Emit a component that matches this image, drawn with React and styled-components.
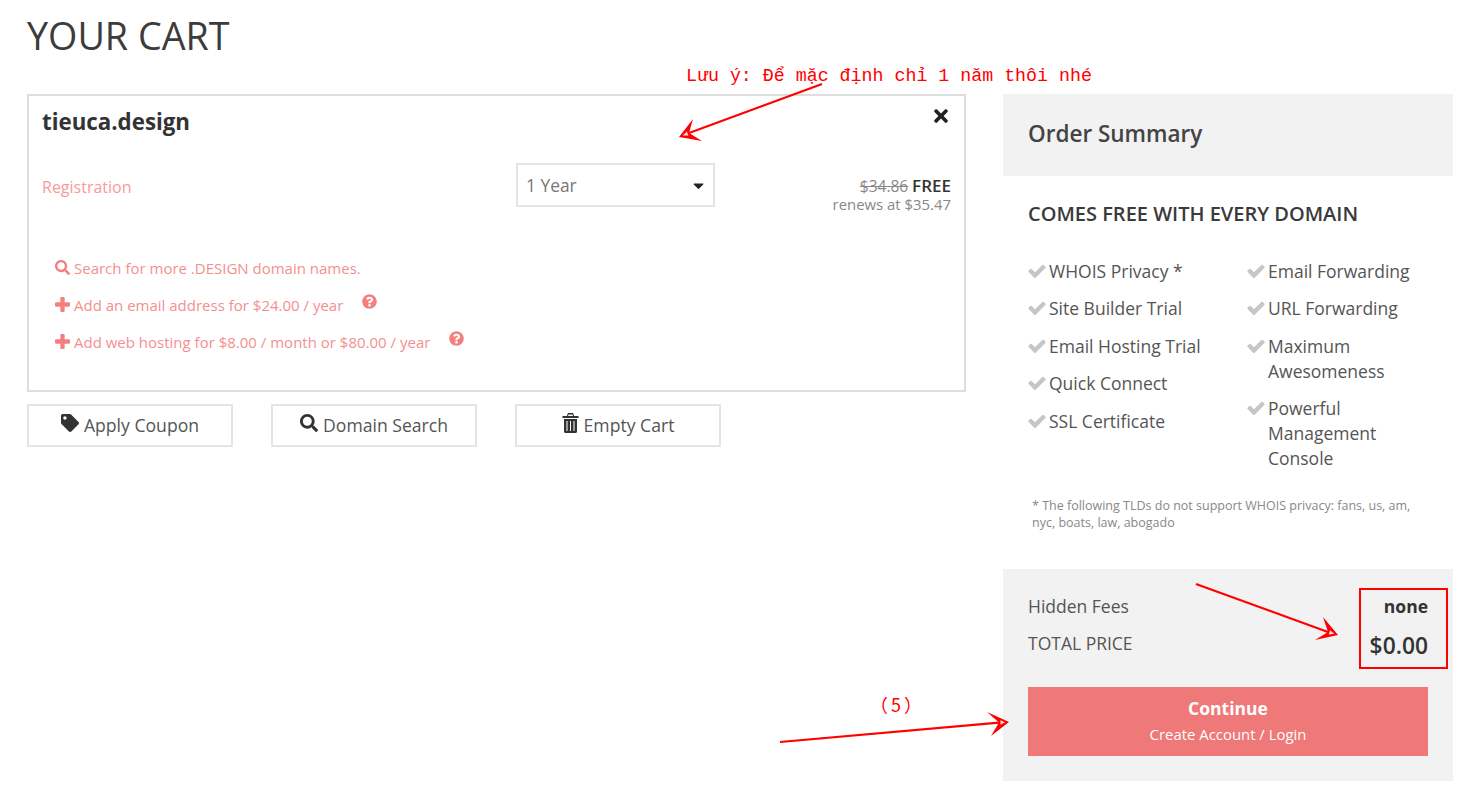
import React from "react";
import styled, { createGlobalStyle } from "styled-components";
import { FaTimes, FaTag, FaSearch, FaQuestionCircle, FaCaretDown } from "react-icons/fa";

const Global = createGlobalStyle`
  html, body { margin: 0; padding: 0; background: #fff; }
  body { font-family: "Open Sans", "Noto Sans", sans-serif; color: #555; }
`;

const Page = styled.div`
  position: relative;
  width: 1475px;
  height: 796px;
  overflow: hidden;
  box-sizing: border-box;
  padding: 0 22px 0 27px;
`;
const Title = styled.h1`
  margin: 0;
  height: 94px;
  padding-top: 11px;
  box-sizing: border-box;
  font-size: 37.7px;
  line-height: 50px;
  font-weight: 400;
  color: #3c3c3c;
`;
const Columns = styled.div`
  display: grid;
  grid-template-columns: 939px 450px;
  column-gap: 37px;
  align-items: start;
`;
const Card = styled.section`
  position: relative;
  box-sizing: border-box;
  height: 298px;
  border: 2px solid #dedede;
  padding: 11px 13px 0 13px;
`;
const DomainName = styled.h2`
  margin: 0;
  font-size: 22.3px;
  line-height: 30px;
  font-weight: 700;
  color: #333;
`;
const RemoveButton = styled.span`
  position: absolute;
  top: 10px;
  right: 13px;
  display: flex;
  color: #222;
  font-size: 20px;
`;
const RegRow = styled.div`
  display: grid;
  grid-template-columns: 474px 199px 1fr;
  margin-top: 26px;
  height: 44px;
`;
const RegLabel = styled.span`
  font-size: 16px;
  line-height: 24px;
  padding-top: 12px;
  color: #f79a9a;
`;
const Select = styled.div`
  display: flex;
  align-items: center;
  justify-content: space-between;
  box-sizing: border-box;
  height: 44px;
  border: 2px solid #e4e4e4;
  padding: 0 6px 0 8px;
  font-size: 17.4px;
  color: #777;
`;
const PriceBox = styled.div`
  text-align: right;
  padding-top: 14px;
  font-size: 14.9px;
  line-height: 18px;
  color: #888;
`;
const OldPrice = styled.s`
  color: #888;
  font-size: 15.5px;
`;
const Free = styled.strong`
  color: #333;
  font-weight: 600;
  font-size: 17px;
`;
const Extras = styled.ul`
  list-style: none;
  margin: 48px 0 0;
  padding: 0 0 0 13px;
  display: flex;
  flex-direction: column;
  gap: 12px;
`;
const Extra = styled.li`
  display: flex;
  align-items: center;
  height: 25px;
  font-size: 15px;
  color: #f58f8f;
  & > svg { font-size: 15px; margin-right: 4px; color: #f37f7f; }
`;
const Help = styled(FaQuestionCircle)`
  margin-left: 19px;
  margin-top: -6px;
  font-size: 18px;
  color: #ef7878;
`;
const Actions = styled.div`
  display: flex;
  gap: 38px;
  margin-top: 12px;
`;
const ActionButton = styled.button`
  display: flex;
  align-items: center;
  justify-content: center;
  gap: 5px;
  box-sizing: border-box;
  width: 206px;
  height: 43px;
  padding: 0 0 1px;
  background: #fff;
  border: 2px solid #e4e4e4;
  font-family: inherit;
  font-size: 17.6px;
  color: #555;
  & > svg { color: #333; font-size: 18px; margin-top: -5px; }
`;
const SummaryHead = styled.div`
  display: flex;
  align-items: center;
  box-sizing: border-box;
  height: 82px;
  padding: 0 0 4px 25px;
  background: #f2f2f2;
  font-size: 22.5px;
  font-weight: 600;
  color: #444;
`;
const FreeTitle = styled.h3`
  margin: 25px 0 0 25px;
  font-size: 20px;
  line-height: 26px;
  font-weight: 600;
  color: #3a3a3a;
`;
const Features = styled.div`
  display: grid;
  grid-template-columns: 219px 180px;
  margin: 31.9px 0 0 25px;
`;
const FeatureCol = styled.ul`
  list-style: none;
  margin: 0;
  padding: 0;
  display: flex;
  flex-direction: column;
  gap: 12.5px;
`;
const Feature = styled.li`
  display: grid;
  grid-template-columns: 21px 1fr;
  font-size: 17.5px;
  line-height: 25px;
  color: #555;
`;
const CheckMark = styled.svg`
  width: 20px;
  height: 20px;
  margin: 2px 0 0 -1px;
  fill: #c6c6c6;
`;
const Note = styled.p`
  margin: 25.6px 20px 0 29px;
  font-size: 12.5px;
  line-height: 17px;
  color: #888;
`;
const Totals = styled.div`
  margin-top: 38px;
  height: 212px;
  box-sizing: border-box;
  padding: 25px 25px 0;
  background: #f2f2f2;
`;
const TotalRow = styled.div`
  display: flex;
  justify-content: space-between;
  height: 37px;
  font-size: 17.5px;
  line-height: 25px;
  color: #555;
`;
const Fee = styled.strong`
  font-size: 17.5px;
  font-weight: 700;
  color: #333;
`;
const Total = styled.strong`
  font-size: 22.8px;
  font-weight: 600;
  line-height: 32px;
  margin-top: -1px;
  color: #333;
`;
const Continue = styled.button`
  display: flex;
  flex-direction: column;
  align-items: center;
  width: 100%;
  height: 69px;
  margin-top: 19px;
  padding: 8px 0 0;
  border: 0;
  background: #ef7878;
  color: #fff;
  font-family: inherit;
`;
const ContinueMain = styled.span`
  font-size: 17.5px;
  line-height: 27px;
  font-weight: 700;
`;
const ContinueSub = styled.span`
  font-size: 14.9px;
  line-height: 25px;
`;
const Note1 = styled.span`
  position: absolute;
  left: 686px;
  top: 65px;
  font-family: "Liberation Mono", "DejaVu Sans Mono", monospace;
  font-size: 18.3px;
  line-height: 22px;
  color: #f00;
  white-space: nowrap;
`;
const Note5 = styled.span`
  position: absolute;
  left: 870px;
  top: 691px;
  font-family: "Noto Sans CJK SC", sans-serif;
  font-size: 18px;
  letter-spacing: 3px;
  line-height: 26px;
  color: #f00;
  white-space: nowrap;
`;
const Overlay = styled.svg`
  position: absolute;
  left: 0;
  top: 0;
  width: 1475px;
  height: 796px;
  pointer-events: none;
`;
const TrashIcon = () => (
  <svg width="17" height="20" viewBox="0 0 17 20" fill="currentColor">
    <path d="M6 0h5l1.2 3H16.500v2H.5V3h4.300zM6.500 1.500 6 3h5l-.5-1.500zM2 6h13v12.500a1.500 1.500 0 0 1-1.500 1.500h-10A1.500 1.500 0 0 1 2 18.500zm2.500 2v10h1V8zm3.500 0v10h1V8zm3.500 0v10h1V8z" fillRule="evenodd" />
  </svg>
);
const PlusIcon = () => (
  <svg width="1em" height="1em" viewBox="0 0 14 14" fill="currentColor">
    <path d="M5 1a1 1 0 0 1 1-1h2a1 1 0 0 1 1 1v4h4a1 1 0 0 1 1 1v2a1 1 0 0 1-1 1H9v4a1 1 0 0 1-1 1H6a1 1 0 0 1-1-1V9H1a1 1 0 0 1-1-1V6a1 1 0 0 1 1-1h4z" />
  </svg>
);
const CheckIcon = () => (
  <CheckMark viewBox="0 0 1792 1792">
    <path d="M1671 566q0 40-28 68l-724 724-136 136q-28 28-68 28t-68-28l-136-136-362-362q-28-28-28-68t28-68l136-136q28-28 68-28t68 28l294 295 656-657q28-28 68-28t68 28l136 136q28 28 28 68z" />
  </CheckMark>
);
const Arrow = ({ from, tip, a, b, n }) => {
  const dx = tip[0] - n[0];
  const dy = tip[1] - n[1];
  const len = Math.hypot(dx, dy);
  const ux = dx / len;
  const uy = dy / len;
  const apex = [tip[0] - ux * 4, tip[1] - uy * 4];
  const s1 = [n[0] + ux * 1.5 - uy * 2.2, n[1] + uy * 1.5 + ux * 2.2];
  const s2 = [n[0] + ux * 1.5 + uy * 2.2, n[1] + uy * 1.5 - ux * 2.2];
  return (
    <g>
      <line x1={from[0]} y1={from[1]} x2={n[0]} y2={n[1]} stroke="#f00" strokeWidth="2.200" />
      <path d={`M${a[0]} ${a[1]} L${tip[0]} ${tip[1]} L${b[0]} ${b[1]} L${n[0]} ${n[1]} Z`} fill="#f00" />
      <path d={`M${apex[0]} ${apex[1]} L${s1[0]} ${s1[1]} L${s2[0]} ${s2[1]} Z`} fill="#fff" fillOpacity="0.85" />
    </g>
  );
};

const left = ["WHOIS Privacy *", "Site Builder Trial", "Email Hosting Trial", "Quick Connect", "SSL Certificate"];
const right = ["Email Forwarding", "URL Forwarding", "Maximum Awesomeness", "Powerful Management Console"];

const FeatureList = ({ items }) => (
  <FeatureCol>
    {items.map((t) => (
      <Feature key={t}><CheckIcon /><span>{t}</span></Feature>
    ))}
  </FeatureCol>
);

export default function App() {
  return (
    <Page>
      <Global />
      <Title>YOUR CART</Title>
      <Columns>
        <div>
          <Card>
            <DomainName>tieuca.design</DomainName>
            <RemoveButton><FaTimes /></RemoveButton>
            <RegRow>
              <RegLabel>Registration</RegLabel>
              <Select>1 Year<FaCaretDown size={17} color="#222" /></Select>
              <PriceBox>
                <OldPrice>$34.86</OldPrice> <Free>FREE</Free>
                <div>renews at $35.47</div>
              </PriceBox>
            </RegRow>
            <Extras>
              <Extra><FaSearch />Search for more .DESIGN domain names.</Extra>
              <Extra><PlusIcon />Add an email address for $24.00 / year<Help /></Extra>
              <Extra><PlusIcon />Add web hosting for $8.00 / month or $80.00 / year<Help /></Extra>
            </Extras>
          </Card>
          <Actions>
            <ActionButton><FaTag />Apply Coupon</ActionButton>
            <ActionButton><FaSearch />Domain Search</ActionButton>
            <ActionButton><TrashIcon />Empty Cart</ActionButton>
          </Actions>
        </div>
        <aside>
          <SummaryHead>Order Summary</SummaryHead>
          <FreeTitle>COMES FREE WITH EVERY DOMAIN</FreeTitle>
          <Features>
            <FeatureList items={left} />
            <FeatureList items={right} />
          </Features>
          <Note>* The following TLDs do not support WHOIS privacy: fans, us, am, nyc, boats, law, abogado</Note>
          <Totals>
            <TotalRow><span>Hidden Fees</span><Fee>none</Fee></TotalRow>
            <TotalRow><span>TOTAL PRICE</span><Total>$0.00</Total></TotalRow>
            <Continue>
              <ContinueMain>Continue</ContinueMain>
              <ContinueSub>Create Account / Login</ContinueSub>
            </Continue>
          </Totals>
        </aside>
      </Columns>
      <Note1>Lưu ý: Để mặc định chỉ 1 năm thôi nhé</Note1>
      <Note5>（5）</Note5>
      <Overlay viewBox="0 0 1475 796">
        <Arrow from={[822, 84]} tip={[679, 137]} a={[693, 119]} b={[702, 141]} n={[689, 133]} />
        <Arrow from={[1196, 584]} tip={[1338, 635]} a={[1323, 617]} b={[1315, 640]} n={[1328, 632]} />
        <Arrow from={[780, 742]} tip={[1009, 722]} a={[987, 712]} b={[991, 736]} n={[999, 722.6]} />
        <rect x="1360" y="589" width="87" height="79" fill="none" stroke="#f00" strokeWidth="2" />
      </Overlay>
    </Page>
  );
}
